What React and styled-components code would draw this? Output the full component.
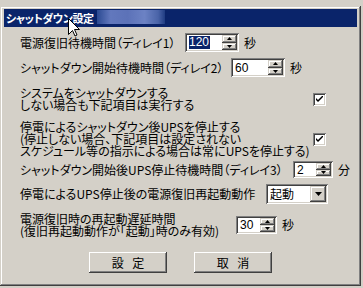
import React from "react";
import styled, { createGlobalStyle } from "styled-components";

const GlobalStyle = createGlobalStyle`
  html, body {
    margin: 0;
    padding: 0;
    background: #d4d0c8;
  }
  body {
    width: 363px;
    height: 288px;
    overflow: hidden;
    font-family: "Noto Sans CJK JP", "Noto Sans", sans-serif;
    font-size: 12px;
    color: #000;
  }
`;

const Screen = styled.div`
    position: relative;
    display: flex;
    width: 363px;
    height: 288px;
    padding-top: 6px;
    box-sizing: border-box;
    background: #d4d0c8;
`;

const Dialog = styled.div`
    width: 361px;
    height: 280px;
    box-sizing: border-box;
    padding: 3px 4px 4px 4px;
    background: #d4d0c8;
    box-shadow: inset -1px -1px #404040, inset 1px 1px #d4d0c8,
        inset -2px -2px #808080, inset 2px 2px #ffffff;
    display: flex;
    flex-direction: column;
`;

const TitleBar = styled.div`
    position: relative;
    height: 18px;
    background: #0a246a;
    display: flex;
    align-items: center;
    padding-left: 2px;
`;

const TitleText = styled.span`
    color: #fff;
    font-weight: bold;
    font-size: 11px;
    letter-spacing: -0.4px;
    line-height: 18px;
    font-feature-settings: "palt";
    white-space: nowrap;
`;

const Blurred = styled.span`
    position: absolute;
    left: 93px;
    top: 1px;
    width: 68px;
    height: 14px;
    background: linear-gradient(90deg, #2b4a92, #6278bd 20%, #5c72b8 45%, #6c82c4 70%, #4a64a8 90%, #1f3c82);
    filter: blur(0.6px);
`;

const Cursor = styled.svg`
    position: absolute;
    left: 64px;
    top: 9px;
`;

const Body = styled.div`
    display: flex;
    flex-direction: column;
    padding-left: 16px;
`;

const Row = styled.div`
    display: flex;
    align-items: center;
    margin-top: ${(p) => p.$top}px;
    height: ${(p) => p.$h}px;
`;

const Label = styled.div`
    width: ${(p) => p.$w}px;
    flex-shrink: 0;
    line-height: 12px;
    font-feature-settings: "palt";
    white-space: nowrap;
`;

const Unit = styled.span`
    margin-left: 5px;
    line-height: 12px;
`;

const Sunken = styled.div`
    background: #fff;
    box-sizing: border-box;
    box-shadow: inset 1px 1px #808080, inset -1px -1px #ffffff,
        inset 2px 2px #404040, inset -2px -2px #d4d0c8;
`;

const SpinBox = styled(Sunken)`
    width: ${(p) => p.$w}px;
    height: ${(p) => p.$h}px;
    padding: 2px;
    display: flex;
`;

const SpinValue = styled.div`
    flex: 1;
    display: flex;
    align-items: center;
    padding-left: 2px;
    font-family: "Liberation Sans", sans-serif;
    font-size: 12px;
`;

const Selected = styled.span`
    background: #0a246a;
    color: #fff;
    line-height: 13px;
    padding-right: 1px;
`;

const SpinButtons = styled.div`
    width: 15px;
    display: flex;
    flex-direction: column;
`;

const SpinButton = styled.div`
    flex: 1;
    background: #d4d0c8;
    box-shadow: inset -1px -1px #404040, inset 1px 1px #d4d0c8,
        inset -2px -2px #808080, inset 2px 2px #ffffff;
    display: flex;
    align-items: center;
    justify-content: center;
`;

const CheckBox = styled(Sunken)`
    width: 13px;
    height: 13px;
    display: flex;
    align-items: center;
    justify-content: center;
`;

const Select = styled(Sunken)`
    width: 62px;
    height: 20px;
    padding: 2px;
    display: flex;
    align-items: center;
`;

const SelectText = styled.div`
    flex: 1;
    padding-left: 2px;
    line-height: 12px;
`;

const DropButton = styled.div`
    width: 16px;
    height: 16px;
    background: #d4d0c8;
    box-shadow: inset -1px -1px #404040, inset 1px 1px #d4d0c8,
        inset -2px -2px #808080, inset 2px 2px #ffffff;
    display: flex;
    align-items: center;
    justify-content: center;
`;

const ButtonRow = styled.div`
    display: flex;
    justify-content: center;
    gap: 27px;
    margin-top: 15px;
    margin-left: -16px;
`;

const Button = styled.div`
    width: 78px;
    height: 21px;
    box-sizing: border-box;
    background: #d4d0c8;
    box-shadow: inset -1px -1px #404040, inset 1px 1px #ffffff,
        inset -2px -2px #808080, inset 2px 2px #d4d0c8;
    display: flex;
    align-items: center;
    justify-content: center;
    letter-spacing: 3px;
    padding-left: 3px;
    line-height: 12px;
`;

const Arrow = ({ up }) => (
    <svg width="5" height="3" viewBox="0 0 5 3">
        <path d={up ? "M2.5 0 L5 3 L0 3 Z" : "M0 0 L5 0 L2.5 3 Z"} fill="#000" />
    </svg>
);

const Spin = ({ value, w, h, selected }) => (
    <SpinBox $w={w} $h={h}>
        <SpinValue>{selected ? <Selected>{value}</Selected> : value}</SpinValue>
        <SpinButtons>
            <SpinButton>
                <Arrow up />
            </SpinButton>
            <SpinButton>
                <Arrow />
            </SpinButton>
        </SpinButtons>
    </SpinBox>
);

const Check = () => (
    <CheckBox>
        <svg width="7" height="7" viewBox="0 0 7 7">
            <path d="M0 2 L0 4 L2 6 L7 1 L7 -1 L2 4 Z" fill="#000" />
        </svg>
    </CheckBox>
);

const App = () => {
    return (
        <Screen>
            <GlobalStyle />
            <Dialog>
                <TitleBar>
                    <TitleText>シャットダウン設定</TitleText>
                    <Blurred />
                    <Cursor width="12" height="19" viewBox="0 0 12 19">
                        <path
                            d="M0.5 0.5 L0.5 16.5 L4.5 12.5 L7 18 L9 17 L6.5 11.5 L11.5 11.5 Z"
                            fill="#fff"
                            stroke="#000"
                            strokeWidth="1"
                        />
                    </Cursor>
                </TitleBar>
                <Body>
                    <Row $top={6} $h={19}>
                        <Label $w={165}>電源復旧待機時間（ディレイ1）</Label>
                        <Spin value="120" w={54} h={19} selected />
                        <Unit>秒</Unit>
                    </Row>
                    <Row $top={6} $h={19}>
                        <Label $w={211}>シャットダウン開始待機時間（ディレイ2）</Label>
                        <Spin value="60" w={54} h={19} />
                        <Unit>秒</Unit>
                    </Row>
                    <Row $top={10} $h={24}>
                        <Label $w={293}>
                            システムをシャットダウンする
                            <br />
                            しない場合も下記項目は実行する
                        </Label>
                        <Check />
                    </Row>
                    <Row $top={10} $h={36}>
                        <Label $w={293}>
                            停電によるシャットダウン後UPSを停止する
                            <br />
                            (停止しない場合、下記項目は設定されない
                            <br />
                            スケジュール等の指示による場合は常にUPSを停止する)
                        </Label>
                        <Check />
                    </Row>
                    <Row $top={4} $h={17}>
                        <Label $w={273}>シャットダウン開始後UPS停止待機時間（ディレイ3）</Label>
                        <Spin value="2" w={40} h={17} />
                        <Unit>分</Unit>
                    </Row>
                    <Row $top={6} $h={20}>
                        <Label $w={246}>停電によるUPS停止後の電源復旧再起動動作</Label>
                        <Select>
                            <SelectText>起動</SelectText>
                            <DropButton>
                                <svg width="7" height="4" viewBox="0 0 7 4">
                                    <path d="M0 0 L7 0 L3.5 4 Z" fill="#000" />
                                </svg>
                            </DropButton>
                        </Select>
                    </Row>
                    <Row $top={9} $h={24}>
                        <Label $w={216}>
                            電源復旧時の再起動遅延時間
                            <br />
                            (復旧再起動動作が「起動」時のみ有効)
                        </Label>
                        <Spin value="30" w={41} h={18} />
                        <Unit>秒</Unit>
                    </Row>
                    <ButtonRow>
                        <Button>設 定</Button>
                        <Button>取 消</Button>
                    </ButtonRow>
                </Body>
            </Dialog>
        </Screen>
    );
};

export default App;
